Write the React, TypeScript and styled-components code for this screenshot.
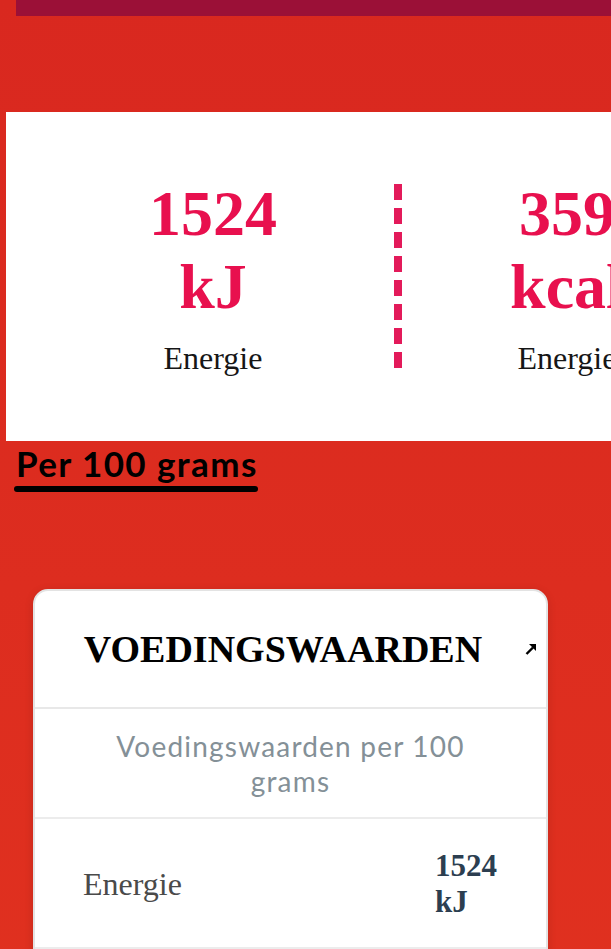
import React from "react";
import styled, { createGlobalStyle } from "styled-components";

const Global = createGlobalStyle`
  html, body { margin: 0; padding: 0; }
  body {
    background: linear-gradient(180deg, #d9281f 0%, #e1321f 100%);
    min-height: 100vh;
    overflow-x: hidden;
    font-family: "Liberation Serif", "Times New Roman", serif;
  }
`;

const Page = styled.div`
  display: flex;
  flex-direction: column;
  align-items: flex-start;
`;

const TopBar = styled.div`
  align-self: stretch;
  margin-left: 16px;
  height: 16px;
  background: #9b1037;
`;

const StatCard = styled.section`
  align-self: stretch;
  margin: 96px 0 0 6px;
  height: 329px;
  background: #ffffff;
  overflow: hidden;
  display: flex;
  align-items: center;
  padding-left: 42px;
`;

const Stat = styled.div`
  flex: 0 0 330px;
  display: flex;
  flex-direction: column;
  align-items: center;
  text-align: center;
`;

const StatValue = styled.div`
  font-family: "Liberation Serif", "Times New Roman", serif;
  font-weight: 700;
  font-size: 64px;
  line-height: 73px;
  color: #e8104e;
`;

const StatLabel = styled.div`
  margin-top: 17px;
  font-family: "Liberation Serif", "Times New Roman", serif;
  font-size: 32px;
  line-height: 36px;
  color: #161616;
`;

const DashedDivider = styled.div`
  flex: 0 0 8px;
  height: 185px;
  margin: 0 0 0 16px;
  background: repeating-linear-gradient(
    180deg,
    #e31a5a 0px,
    #e31a5a 16px,
    transparent 16px,
    transparent 24px
  );
`;

const SectionTitle = styled.div`
  margin: 2px 0 0 14px;
  display: inline-flex;
  flex-direction: column;
`;

const SectionText = styled.h2`
  margin: 0;
  padding-left: 2px;
  font-family: Lato, "Open Sans", sans-serif;
  font-weight: 700;
  font-size: 35px;
  letter-spacing: 1.4px;
  line-height: 40px;
  color: #000;
`;

const SectionBar = styled.div`
  margin-top: 3px;
  height: 6px;
  border-radius: 3px;
  background: #000;
`;

const NutritionCard = styled.section`
  margin: 97px 0 0 33px;
  width: 515px;
  box-sizing: border-box;
  background: #fff;
  border: 2px solid #e3e3e3;
  border-radius: 15px;
  box-shadow: 0 2px 10px rgba(0, 0, 0, 0.12);
  overflow: hidden;
`;

const CardHeader = styled.header`
  height: 116px;
  display: flex;
  align-items: center;
  padding: 0 9px 0 16px;
  border-bottom: 2px solid #e8e8e8;
`;

const CardTitle = styled.h3`
  flex: 1;
  margin: 0;
  text-align: center;
  font-family: "Liberation Serif", "Times New Roman", serif;
  font-weight: 700;
  font-size: 38px;
  line-height: 44px;
  color: #000;
`;

const ExpandIcon = styled.svg`
  flex: 0 0 12px;
  width: 12px;
  height: 12px;
  margin-left: 10px;
`;

const CardSubtitle = styled.div`
  padding: 20px 56px 18px;
  text-align: center;
  font-family: Lato, "Open Sans", sans-serif;
  font-weight: 400;
  font-size: 28px;
  letter-spacing: 1.2px;
  line-height: 35px;
  color: #849097;
  border-bottom: 2px solid #ececec;
`;

const Row = styled.div`
  display: grid;
  grid-template-columns: 1fr 80px;
  align-items: center;
  padding: 29px 31px 27px 48px;
  border-bottom: 2px solid #ececec;
`;

const RowLabel = styled.div`
  font-family: "Liberation Serif", "Times New Roman", serif;
  font-size: 32px;
  line-height: 36px;
  color: #4a4a4a;
`;

const RowValue = styled.div`
  font-family: "Liberation Serif", "Times New Roman", serif;
  font-weight: 700;
  font-size: 31px;
  line-height: 36px;
  color: #2c3e50;
`;

const stats = [
  { value: "1524", unit: "kJ", label: "Energie" },
  { value: "359", unit: "kcal", label: "Energie" },
];

const rows = [
  { label: "Energie", value: "1524 kJ" },
  { label: "Energie", value: "359 kcal" },
  { label: "Vet", value: "12 g" },
];

export default function App() {
  return (
    <Page>
      <Global />
      <TopBar />
      <StatCard>
        <Stat>
          <StatValue>
            {stats[0].value}
            <br />
            {stats[0].unit}
          </StatValue>
          <StatLabel>{stats[0].label}</StatLabel>
        </Stat>
        <DashedDivider />
        <Stat>
          <StatValue>
            {stats[1].value}
            <br />
            {stats[1].unit}
          </StatValue>
          <StatLabel>{stats[1].label}</StatLabel>
        </Stat>
      </StatCard>
      <SectionTitle>
        <SectionText>Per 100 grams</SectionText>
        <SectionBar />
      </SectionTitle>
      <NutritionCard>
        <CardHeader>
          <CardTitle>VOEDINGSWAARDEN</CardTitle>
          <ExpandIcon viewBox="0 0 12 12" aria-hidden="true">
            <path d="M1.5 11 L8 4.5" stroke="#000" strokeWidth="2.4" strokeLinecap="butt" />
            <path d="M4 1 L11 1 L11 8 Z" fill="#000" />
          </ExpandIcon>
        </CardHeader>
        <CardSubtitle>Voedingswaarden per 100 grams</CardSubtitle>
        {rows.map((r, i) => (
          <Row key={i}>
            <RowLabel>{r.label}</RowLabel>
            <RowValue>{r.value}</RowValue>
          </Row>
        ))}
      </NutritionCard>
    </Page>
  );
}
